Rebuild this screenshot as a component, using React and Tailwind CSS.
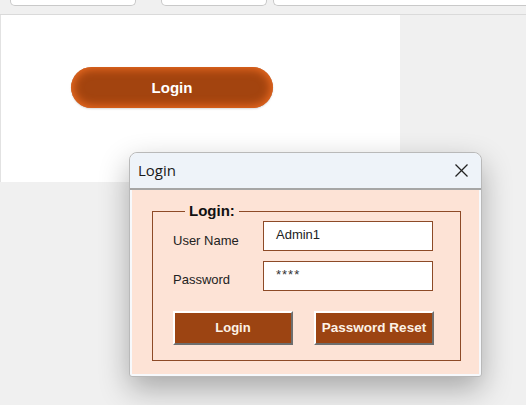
export default function App() {
  return (
    <div className="relative w-[526px] h-[405px] overflow-hidden bg-[#f0f0f0] font-['Liberation_Sans',sans-serif]">
      {/* top toolbar remnants */}
      <div className="flex h-[14px] items-start">
        <div className="ml-[10px] w-[126px] h-[6px] bg-white border border-t-0 border-[#c9c9c9] rounded-b-[5px]" />
        <div className="ml-[25px] w-[106px] h-[6px] bg-white border border-t-0 border-[#c9c9c9] rounded-b-[5px]" />
        <div className="ml-[6px] flex-1 h-[6px] bg-white border border-t-0 border-r-0 border-[#c9c9c9] rounded-bl-[5px]" />
      </div>
      <div className="h-px bg-[#dadada]" />

      {/* sheet area */}
      <div className="w-[400px] h-[167px] bg-white border-l border-[#e2e2e2] pt-[52px] pl-[70px]">
        <button className="w-[202px] h-[41px] pt-[2px] rounded-full bg-[#a3440f] shadow-[inset_0_0_10px_2px_#ef6c22,0_1px_2px_rgba(0,0,0,0.15)] text-white text-[15px] font-bold">
          Login
        </button>
      </div>

      {/* dialog window */}
      <div className="absolute left-[129px] top-[152px] w-[353px] h-[225px] flex flex-col bg-[#f7f9fc] border border-[#b9b9b9] rounded-t-[8px] rounded-b-[3px] shadow-[0_12px_30px_rgba(0,0,0,0.3)]">
        <div className="shrink-0 h-[37px] flex items-center justify-between pl-[8px] pr-[13px] bg-[#eef3f9] rounded-t-[8px] border-b-2 border-[#a6a6a6]">
          <span className="text-[15px] text-[#1a1a1a] font-['Open_Sans',sans-serif]">Login</span>
          <svg width="13" height="13" viewBox="0 0 13 13" stroke="#222" strokeWidth="1.2">
            <line x1="0.5" y1="0.5" x2="12.5" y2="12.5" />
            <line x1="12.5" y1="0.5" x2="0.5" y2="12.5" />
          </svg>
        </div>
        <div className="flex-1 mx-[2px] mb-[2px] bg-[#fde3d6] pt-[12px] pl-[20px] pr-[18px]">
          <fieldset className="border border-[#8d4a27] pl-[20px] pb-[15px]">
            <legend className="ml-[12px] px-[4px] text-[15px] font-bold text-[#111] leading-[18px]">Login:</legend>
            <div className="flex items-center mt-[1px]">
              <span className="w-[90px] text-[13px] text-[#222] pt-[9px]">User Name</span>
              <div className="w-[170px] h-[30px] bg-white border border-[#8d4a27] pl-[12px] pt-[3px] text-[13px] text-[#222]">Admin1</div>
            </div>
            <div className="flex items-center mt-[10px]">
              <span className="w-[90px] text-[13px] text-[#222] pt-[7px]">Password</span>
              <div className="w-[170px] h-[30px] bg-white border border-[#8d4a27] pl-[12px] pt-[3px] text-[13px] text-[#333] tracking-[1px]">****</div>
            </div>
            <div className="flex gap-[21px] mt-[20px]">
              <button className="w-[120px] h-[34px] bg-[#9c4412] border-2 border-t-white border-l-white border-b-[#6e6e6e] border-r-[#6e6e6e] text-[13px] font-bold text-[#fdf2e6]">
                Login
              </button>
              <button className="w-[120px] h-[34px] bg-[#9c4412] border-2 border-t-white border-l-white border-b-[#6e6e6e] border-r-[#6e6e6e] text-[13.5px] font-bold text-[#fdf2e6]">
                Password Reset
              </button>
            </div>
          </fieldset>
        </div>
      </div>
    </div>
  );
}
